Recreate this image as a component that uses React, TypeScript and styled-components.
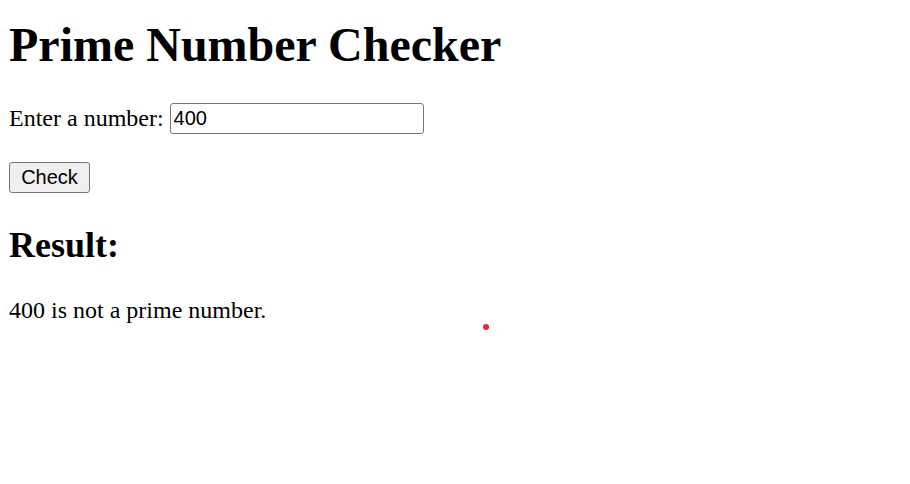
import React, { useState } from "react";
import styled, { createGlobalStyle } from "styled-components";

const GlobalStyle = createGlobalStyle`
  body {
    margin: 0;
    padding: 0 9px;
    background: #fff;
    color: #000;
    font-family: "Liberation Serif", "Times New Roman", serif;
  }
`;

const Page = styled.div`
  position: relative;
  display: flex;
  flex-direction: column;
  align-items: flex-start;
  min-height: 484px;
`;

const Title = styled.h1`
  margin: 17px 0 0;
  font-size: 48px;
  font-weight: bold;
  line-height: normal;
`;

const Row = styled.div`
  display: flex;
  align-items: center;
  height: 31px;
  margin-top: 31px;
  font-size: 24px;
`;

const Label = styled.label`
  margin-right: 6px;
`;

const NumberInput = styled.input`
  box-sizing: border-box;
  width: 254px;
  height: 31px;
  padding: 1px 3px;
  border: 1px solid #767676;
  border-radius: 3px;
  font-family: "Liberation Sans", Arial, sans-serif;
  font-size: 20px;
  color: #000;
  background: #fff;
  outline: none;
`;

const CheckButton = styled.button`
  box-sizing: border-box;
  width: 81px;
  height: 31px;
  margin-top: 28px;
  padding: 0 9px;
  border: 1px solid #767676;
  border-radius: 3px;
  background: #efefef;
  font-family: "Liberation Sans", Arial, sans-serif;
  font-size: 20px;
  color: #000;
`;

const ResultHeading = styled.h2`
  margin: 31px 0 0;
  font-size: 36px;
  font-weight: bold;
  line-height: normal;
`;

const ResultText = styled.p`
  margin: 31px 0 0;
  font-size: 24px;
  line-height: normal;
`;

const Cursor = styled.span`
  position: absolute;
  left: 474px;
  top: 324px;
  width: 6px;
  height: 6px;
  border-radius: 50%;
  background: #e8262b;
`;

const isPrime = (n: number) => {
  if (n < 2 || !Number.isInteger(n)) return false;
  for (let i = 2; i * i <= n; i++) {
    if (n % i === 0) return false;
  }
  return true;
};

const App = () => {
  const [value, setValue] = useState("400");
  const [checked, setChecked] = useState("400");

  const n = Number(checked);

  return (
    <Page>
      <GlobalStyle />
      <Title>Prime Number Checker</Title>
      <Row>
        <Label htmlFor="num">Enter a number:</Label>
        <NumberInput
          id="num"
          type="text"
          value={value}
          onChange={(e) => setValue(e.target.value)}
        />
      </Row>
      <CheckButton type="button" onClick={() => setChecked(value)}>
        Check
      </CheckButton>
      <ResultHeading>Result:</ResultHeading>
      <ResultText>
        {checked} is {isPrime(n) ? "" : "not "}a prime number.
      </ResultText>
      <Cursor />
    </Page>
  );
};

export default App;
